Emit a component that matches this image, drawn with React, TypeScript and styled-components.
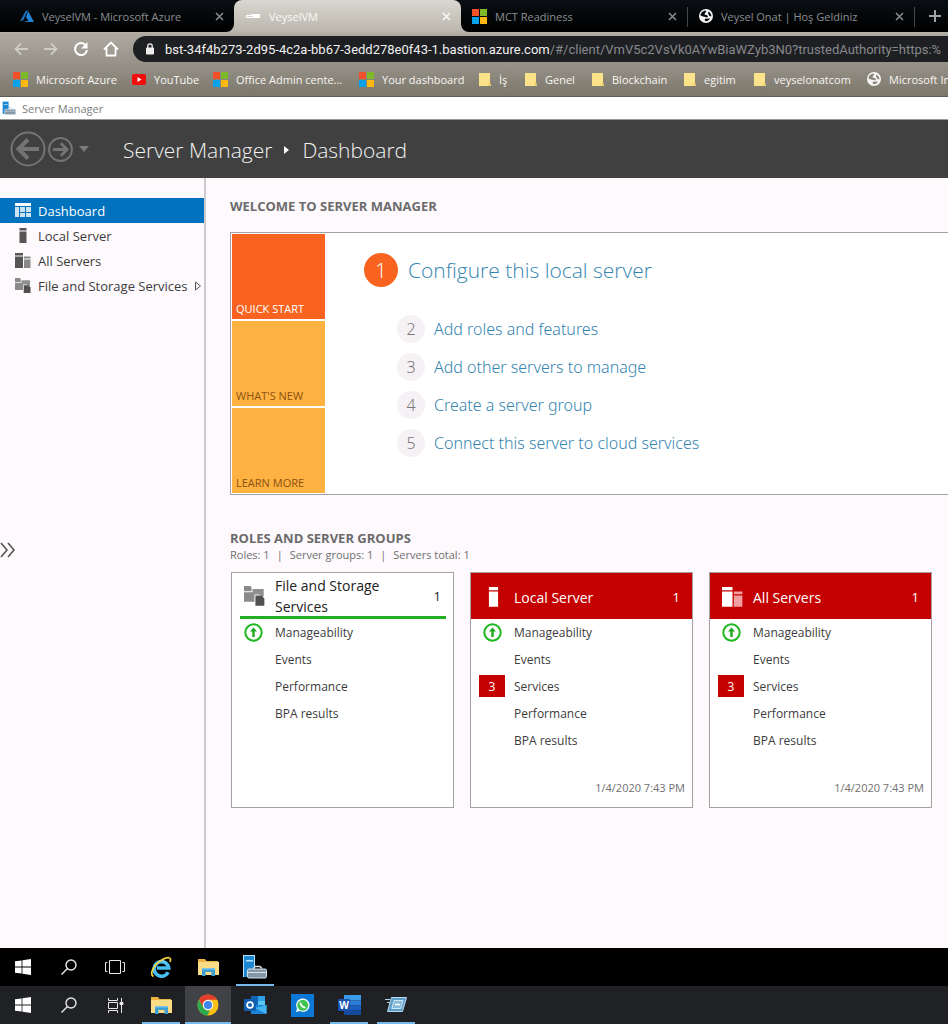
import React from "react";
import styled, { createGlobalStyle, css } from "styled-components";

const GlobalStyle = createGlobalStyle`
  *, *::before, *::after { box-sizing: border-box; }
  body { margin: 0; background: #fdf9fd; font-family: "Open Sans", "Noto Sans", sans-serif; font-size: 13px; color: #444; }
  button, input { font: inherit; color: inherit; background: none; border: 0; padding: 0; margin: 0; }
  a { color: inherit; text-decoration: none; }
  ul, ol { list-style: none; margin: 0; padding: 0; }
  h1, h2, h3, p { margin: 0; font: inherit; }
  svg { display: block; flex: none; }
`;

const Screen = styled.div`
  display: flex;
  flex-direction: column;
  min-height: 100vh;
  overflow: hidden;
`;

/* ---------- Browser ---------- */

const Browser = styled.header`
  color: #fff;
`;

const TabStrip = styled.div`
  display: flex;
  height: 34px;
  background: linear-gradient(#dad7d0, #bbb7ae 31px, #aeaaa1);
`;

const DarkTabs = styled.div<{ $side: "left" | "right" }>`
  display: flex;
  height: 32px;
  background: linear-gradient(#0a0f13, #020405 70%, #000);
  ${(p) =>
    p.$side === "left"
      ? css`padding-left: 9px; border-bottom-right-radius: 8px;`
      : css`flex: 1; border-bottom-left-radius: 8px;`}
`;

const ActiveSlot = styled.div`
  height: 34px;
  background: linear-gradient(#05080a 10px, transparent 10px);
`;

const Tab = styled.div<{ $active?: boolean; $first?: boolean; $line?: boolean }>`
  display: flex;
  align-items: center;
  gap: 7px;
  width: ${(p) => (p.$first ? 225 : 227)}px;
  height: 32px;
  padding: 0 10px 0 11px;
  font-size: 11px;
  color: ${(p) => (p.$active ? "#f8f8f6" : "#8b8e90")};
  ${(p) =>
    p.$active &&
    css`
      height: 34px;
      padding-bottom: 2px;
      border-radius: 8px 8px 0 0;
      background: linear-gradient(#dad7d0, #bbb7ae 31px, #aeaaa1);
    `}
  ${(p) => p.$line && css`border-right: 1px solid transparent; border-image: linear-gradient(transparent 8px, #45484a 8px 26px, transparent 26px) 1;`}
`;

const TabLink = styled.a`
  display: flex;
  align-items: center;
  gap: 8px;
  flex: 1;
  white-space: nowrap;
`;

const IconButton = styled.button`
  display: grid;
  place-items: center;
`;

const NewTab = styled(IconButton)`
  width: 40px;
  height: 32px;
  color: #a0a2a3;
`;

const BrowserBars = styled.div`
  background: linear-gradient(#aeaaa1, #7c776b);
  border-bottom: 1px solid #5f5c53;
`;

const Toolbar = styled.div`
  display: flex;
  align-items: center;
  height: 30px;
  padding-left: 13px;
`;

const NavButtons = styled.nav`
  display: flex;
  gap: 14px;
  width: 120px;
`;

const Address = styled.div`
  display: flex;
  align-items: center;
  flex: 1;
  min-width: 0;
  height: 26px;
  padding-left: 12px;
  background: #1e1f23;
  border-radius: 13px 0 0 13px;
  overflow: hidden;
`;

const UrlPart = styled.input<{ $host?: boolean }>`
  height: 26px;
  outline: 0;
  font-family: Roboto, "Open Sans", sans-serif;
  font-size: 13px;
  ${(p) =>
    p.$host
      ? css`field-sizing: content; flex: none; margin-left: 10px; color: #f1f1f1;`
      : css`flex: 1; min-width: 0; color: #87898c;`}
`;

const Bookmarks = styled.nav`
  display: flex;
  align-items: center;
  gap: 16px;
  height: 32px;
  padding: 0 0 2px 13px;
  overflow: hidden;
  font-size: 11px;
  color: #f7f6f3;
`;

const Bookmark = styled.a<{ $w: number }>`
  display: flex;
  align-items: center;
  gap: 8px;
  flex: none;
  width: ${(p) => p.$w}px;
  white-space: nowrap;
`;

/* ---------- Server Manager window ---------- */

const WindowTitle = styled.div`
  display: flex;
  align-items: center;
  gap: 6px;
  height: 23px;
  padding-left: 2px;
  background: #fff;
  border-bottom: 1px solid #999;
  font-size: 11px;
  color: #7d7d7d;
`;

const Banner = styled.div`
  display: flex;
  align-items: center;
  height: 58px;
  padding-left: 10px;
  background: #404040;
  color: #f2f2f2;
`;

const History = styled.div`
  display: flex;
  align-items: center;
  gap: 2px;
  width: 113px;
`;

const Crumbs = styled.h1`
  display: flex;
  align-items: center;
  gap: 12px;
  padding-top: 2px;
  font-size: 21px;
  font-weight: 300;
  white-space: nowrap;
`;

const Body = styled.div`
  display: flex;
  flex: 1;
`;

const Sidebar = styled.aside`
  display: flex;
  flex-direction: column;
  flex: none;
  width: 206px;
  padding-top: 20px;
  border-right: 2px solid #cdcacd;
`;

const SideLink = styled.a<{ $active?: boolean }>`
  display: flex;
  align-items: center;
  gap: 7px;
  height: 25px;
  padding-left: 15px;
  font-size: 13px;
  white-space: nowrap;
  color: ${(p) => (p.$active ? "#fff" : "#3c3c3c")};
  background: ${(p) => (p.$active ? "#0072be" : "transparent")};
`;

const ExpandButton = styled(IconButton)`
  width: 16px;
  height: 20px;
  margin-top: 242px;
`;

const Main = styled.main`
  flex: 1;
  min-width: 0;
  padding: 18px 0 40px 24px;
`;

const SectionTitle = styled.h2`
  font-size: 13px;
  line-height: 20px;
  font-weight: 700;
  color: #6b6b6b;
`;

const Welcome = styled.section`
  display: flex;
  margin: 16px 0 33px;
  padding: 1px;
  background: #fff;
  border: 1px solid #a3a1a3;
  border-right: 0;
`;

const Tiles = styled.div`
  display: flex;
  flex-direction: column;
  gap: 2px;
  width: 93px;
`;

const Tile = styled.button<{ $active?: boolean }>`
  display: flex;
  align-items: flex-end;
  height: 85px;
  padding: 0 4px 3px;
  font-size: 11px;
  white-space: nowrap;
  color: ${(p) => (p.$active ? "#fff" : "#8a5210")};
  background: ${(p) => (p.$active ? "#f86420" : "#ffb142")};
`;

const Steps = styled.ol`
  padding: 17px 0 0 39px;
  color: #3585b0;
`;

const Step = styled.li<{ $main?: boolean }>`
  display: flex;
  align-items: center;
  gap: ${(p) => (p.$main ? 10 : 9)}px;
  height: 38px;
  padding-left: ${(p) => (p.$main ? 0 : 33)}px;
  margin-bottom: ${(p) => (p.$main ? 21 : 0)}px;
  font-family: ${(p) => (p.$main ? `"Open Sans", sans-serif` : `"Noto Sans", "Open Sans", sans-serif`)};
  font-size: ${(p) => (p.$main ? 21 : 16)}px;
  font-weight: 300;
  white-space: nowrap;
`;

const StepNumber = styled.span<{ $main?: boolean }>`
  display: grid;
  place-items: center;
  width: ${(p) => (p.$main ? 34 : 28)}px;
  height: ${(p) => (p.$main ? 34 : 28)}px;
  border-radius: 50%;
  color: ${(p) => (p.$main ? "#fff" : "#777")};
  background: ${(p) => (p.$main ? "#f86420" : "#f5f1f5")};
`;

const Summary = styled.p`
  display: flex;
  gap: 7px;
  font-size: 11px;
  line-height: 14px;
  color: #707070;
`;

const Cards = styled.div`
  display: flex;
  gap: 16px;
  padding: 10px 0 0 1px;
`;

const Card = styled.article`
  display: flex;
  flex-direction: column;
  flex: none;
  width: 223px;
  min-height: 236px;
  background: #fff;
  border: 1px solid #a3a1a3;
`;

const CardHead = styled.h3<{ $alert?: boolean }>`
  display: flex;
  align-items: center;
  height: 46px;
  font-size: 14px;
  line-height: 21px;
  ${(p) =>
    p.$alert
      ? css`padding: 2px 12px 0 12px; background: #c40000; color: #fff;`
      : css`margin: 0 7px 0 8px; padding: 3px 5px 0 4px; border-bottom: 3px solid #22b022; color: #222;`}
`;

const CardName = styled.a`
  flex: 1;
  margin-left: 10px;
`;

const Count = styled.span`
  font-size: 13px;
`;

const Rows = styled.ul`
  display: flex;
  flex-direction: column;
  gap: 1px;
  flex: 1;
`;

const Row = styled.li`
  display: flex;
  align-items: center;
  gap: 9px;
  height: 26px;
  padding-left: 8px;
  font-size: 12px;
  color: #3c3c3c;
`;

const Slot = styled.span<{ $alert?: boolean }>`
  display: grid;
  place-items: center;
  width: 26px;
  height: 22px;
  color: #fff;
  background: ${(p) => (p.$alert ? "#c40000" : "transparent")};
`;

const Stamp = styled.time`
  padding: 0 7px 10px;
  text-align: right;
  font-size: 11px;
  line-height: 18px;
  color: #707070;
`;

/* ---------- Taskbars ---------- */

const Taskbar = styled.nav<{ $host?: boolean }>`
  display: flex;
  height: 38px;
  background: ${(p) => (p.$host ? "#1f2124" : "#000")};
`;

const Apps = styled.div`
  display: flex;
  gap: 1px;
`;

const TaskButton = styled(IconButton)<{ $open?: boolean; $focus?: boolean }>`
  width: 46px;
  height: 38px;
  color: #fff;
  background:
    ${(p) =>
      p.$focus
        ? "linear-gradient(#76b9ed, #76b9ed) bottom / 46px 2px no-repeat, #404245"
        : p.$open
          ? "linear-gradient(#76b9ed, #76b9ed) bottom / 38px 2px no-repeat"
          : "none"};
`;

/* ---------- Icons ---------- */

const MsLogo = () => (
  <svg width="15" height="15" viewBox="0 0 15 15">
    <path fill="#f0512a" d="M0 0h7v7H0z" />
    <path fill="#7db928" d="M8 0h7v7H8z" />
    <path fill="#08a1ea" d="M0 8h7v7H0z" />
    <path fill="#fdb811" d="M8 8h7v7H8z" />
  </svg>
);

const AzureLogo = () => (
  <svg width="14" height="13" viewBox="0 0 14 13">
    <path fill="#1a6fb8" d="M5.6 1 8 0l-4.500 10L0 11.500z" />
    <path fill="#2387d8" d="M8 1l6 11H3.500l5-1.200L6 7.500z" />
  </svg>
);

const BastionIcon = () => (
  <svg width="16" height="6" viewBox="0 0 16 6">
    <path fill="#fff" d="M1 2h4l1-1h9v4H1z" />
    <path stroke="#d6d2ca" d="M2 3.500h6" />
  </svg>
);

const Globe = ({ hole }: { hole: string }) => (
  <svg width="14" height="14" viewBox="0 0 14 14">
    <circle cx="7" cy="7" r="7" fill="#f5f5f5" />
    <path fill={hole} d="M1.500 6.500C1.600 4 3.500 2 6 1.500l1.500 1L6 4l-.5 1.500 2 .5 1.500 1-.5 1.500-2-.5L4 7.500z" />
    <path fill={hole} d="M9.500 2.500c2 1 3 3 2.800 5L10.500 7 9 4.500zM6.500 9.500l2.500.3L11 9.200c-.8 2-2.200 3-4.300 3L5.500 11z" />
  </svg>
);

const Folder = () => (
  <svg width="12" height="13" viewBox="0 0 12 13">
    <path fill="#fce38a" d="M0 0h11v9l1 4H0z" />
    <path fill="#efcb62" d="M11 8v5H9z" />
  </svg>
);

const YouTube = () => (
  <svg width="14" height="11" viewBox="0 0 14 11">
    <rect width="14" height="11" rx="2" fill="#f20d0d" />
    <path fill="#fff" d="m5.500 3 4 2.500-4 2.500z" />
  </svg>
);

const Cross = () => (
  <svg width="9" height="9" viewBox="0 0 9 9" fill="none" stroke="currentColor" strokeWidth="1.500">
    <path d="m1 1 7 7M8 1 1 8" />
  </svg>
);

const Plus = () => (
  <svg width="12" height="12" viewBox="0 0 12 12" stroke="currentColor" strokeWidth="2">
    <path d="M6 0v12M0 6h12" />
  </svg>
);

const NavArrow = ({ flip }: { flip?: boolean }) => (
  <svg width="16" height="16" viewBox="0 0 16 16" fill="none" stroke="#cfccc5" strokeWidth="1.800">
    <path d={flip ? "M1 8h12M8 2.500 13.500 8 8 13.500" : "M15 8H3M8 2.500 2.500 8 8 13.500"} />
  </svg>
);

const Reload = () => (
  <svg width="16" height="16" viewBox="0 0 16 16">
    <path d="M12.800 4.300A6 6 0 1 0 14 9" fill="none" stroke="#fff" strokeWidth="2" />
    <path fill="#fff" d="M14.500 1v6.500H8z" />
  </svg>
);

const Home = () => (
  <svg width="16" height="16" viewBox="0 0 16 16" fill="none" stroke="#fff" strokeWidth="1.800">
    <path d="M1 8.500 8 1.500l7 7M3.500 7v7.500h9V7" />
  </svg>
);

const Lock = () => (
  <svg width="10" height="12" viewBox="0 0 10 12">
    <rect x="1" y="4.500" width="8" height="7" rx="1" fill="#eee" />
    <path d="M2.800 5V3a2.200 2.200 0 0 1 4.400 0v2" fill="none" stroke="#eee" strokeWidth="1.300" />
  </svg>
);

const ServerManagerIcon = ({ size }: { size: number }) => (
  <svg width={size} height={size} viewBox="0 0 24 24">
    <path fill="#1e87d2" d="M1 1h11v21H1z" />
    <path fill="#b8e0fa" d="M0 0h12v1H1v21H0zM3 5h7v1.500H3zM11 1h1v10h-1z" />
    <path fill="none" stroke="#d5dde3" strokeWidth="1.500" d="M10.500 13.500 12 11.500h5l2 2" />
    <rect x="4.500" y="14" width="19" height="9" rx="1.500" fill="#8497a5" stroke="#d5e2ec" />
    <path stroke="#d5e2ec" d="M5 17.500h18" />
  </svg>
);

const HistoryArrow = ({ size, flip }: { size: number; flip?: boolean }) => (
  <svg width={size} height={size} viewBox="0 0 36 36" fill="none" stroke="#747474">
    <circle cx="18" cy="18" r="16.500" strokeWidth={flip ? 2.800 : 2} />
    <path strokeWidth="4" d={flip ? "M7 18h20M18.500 9l9 9-9 9" : "M29 18H9M18 8.500 8.500 18l9.500 9.500"} />
  </svg>
);

const DashboardIcon = () => (
  <svg width="16" height="15" viewBox="0 0 16 15" fill="#fff">
    <path d="M0 0h16v3H0z" />
    <path opacity=".8" d="M0 4h4v10H0zM5 4h5v5H5zM11 4h5v5h-5zM5 10h5v4H5zM11 10h5v4h-5z" />
  </svg>
);

const ServerIcon = ({ size = 16, color = "#555" }: { size?: number; color?: string }) => (
  <svg width={size} height={size} viewBox="0 0 16 16" fill={color}>
    <path d="M4.500 0h7v2.500h-7zM4.500 3.500h7V15h-7z" />
  </svg>
);

const ServersIcon = ({ size = 16, color = "#555", back = "#888" }: { size?: number; color?: string; back?: string }) => (
  <svg width={size} height={size} viewBox="0 0 16 16">
    <path fill={color} d="M0 0h8v2.500H0zM0 3.500h8V15H0z" />
    <path fill={back} d="M9 3.500h6.500v2H9zM9 6.500h6.500V15H9z" />
  </svg>
);

const StorageIcon = ({ size = 16 }: { size?: number }) => (
  <svg width={size} height={size} viewBox="0 0 16 16">
    <path fill="#8a8a8a" d="M0 0h5l.8 1.500V4H0zM0 4.800h7V12H0z" />
    <path fill="#8f8f8f" d="M6.500 2.200H15V8h-1.500l-2-1.500H8v5.500H6.500z" />
    <path fill="#505050" d="M8.700 7.200h4.600L15.500 9.500V15H8.700z" />
  </svg>
);

const UpIcon = () => (
  <svg width="19" height="19" viewBox="0 0 19 19">
    <circle cx="9.500" cy="9.500" r="8.200" fill="#fff" stroke="#1fb81f" strokeWidth="2" />
    <path fill="#1fa81f" d="M9.500 4.500 13 8.500h-2.300V14H8.300V8.500H6z" />
  </svg>
);

const WindowsLogo = () => (
  <svg width="16" height="16" viewBox="0 0 16 16" fill="#fff">
    <path d="M0 2.300 6.600 1.400v6.200H0zM7.400 1.300 16 0v7.600H7.400zM0 8.400h6.600v6.200L0 13.700zM7.400 8.400H16V16l-8.600-1.300z" />
  </svg>
);

const Magnifier = () => (
  <svg width="16" height="16" viewBox="0 0 16 16" fill="none" stroke="#e8e8e8" strokeWidth="1.400">
    <circle cx="10" cy="6" r="5" />
    <path d="M6.500 9.500.5 15.500" />
  </svg>
);

const TaskView = () => (
  <svg width="20" height="14" viewBox="0 0 20 14" fill="none" stroke="#e8e8e8">
    <path d="M4.500.5h11v13h-11zM2.500 2.500h-2v9h2M17.500 2.500h2v9h-2" />
  </svg>
);

const Timeline = () => (
  <svg width="17" height="15" viewBox="0 0 17 15" fill="none" stroke="#e8e8e8">
    <path d="M1.500 0v2.500h9V0M1.500 15v-2.500h9V15M1.500 4.500h9v6h-9zM14.500 0v15" />
    <path fill="#e8e8e8" d="M13 4.500h3v2h-3z" />
  </svg>
);

const InternetExplorer = () => (
  <svg width="22" height="22" viewBox="0 0 22 22" fill="none">
    <path d="M18 16.200A7.300 7.300 0 1 1 18.700 12H7" stroke="#45bdf0" strokeWidth="3.600" />
    <path d="M16.800 7.200a6.500 6.500 0 0 0-9-1.200" stroke="#a8e3fb" strokeWidth="1" />
    <path d="M3.500 20.500C-1 18 4 8 12.500 3.500 18 .5 22 1 20 6" stroke="#f2d13c" strokeWidth="1.700" />
  </svg>
);

const Explorer = () => (
  <svg width="21" height="18" viewBox="0 0 21 18">
    <path fill="#e9b344" d="M0 1h7l1.500 2H20v4H0z" />
    <path fill="#fbdc86" d="M0 4h21v13H0z" />
    <path fill="#3e9fd0" d="M4 10h13v8h-3.500v-4h-6v4H4z" />
    <path fill="#79c4e6" d="M4 10h13v1.500H4z" />
  </svg>
);

const Chrome = () => (
  <svg width="22" height="22" viewBox="0 0 22 22">
    <circle cx="11" cy="11" r="10.500" fill="#fbc116" />
    <path fill="#e33b2e" d="M1.900 5.750A10.500 10.500 0 0 1 20.100 5.750H11A5.250 5.250 0 0 0 6.450 13.600z" />
    <path fill="#2da94f" d="M1.900 5.750 6.450 13.600A5.250 5.250 0 0 0 13 15.900L10.500 21.500A10.500 10.500 0 0 1 1.900 5.750z" />
    <circle cx="11" cy="11" r="5.200" fill="#f5f5f5" />
    <circle cx="11" cy="11" r="4" fill="#3e83ee" />
  </svg>
);

const Outlook = () => (
  <svg width="23" height="22" viewBox="0 0 23 22">
    <path fill="#1065b5" d="M7 2h14v9H7z" />
    <path fill="#2f9fe5" d="M14 2h7v5h-7z" />
    <path fill="#5cc6f5" d="M14 7h7v5h-7z" />
    <path fill="#1a85d6" d="M7 11l15.500 0V20H7z" />
    <path fill="#43b4ef" d="M22.500 11v9L11 14z" />
    <rect x="0" y="5" width="12" height="12" rx="1" fill="#0f5fb0" />
    <circle cx="6" cy="11" r="2.900" fill="none" stroke="#fff" strokeWidth="1.800" />
  </svg>
);

const WhatsApp = () => (
  <svg width="23" height="23" viewBox="0 0 23 23">
    <path fill="#0a78d4" d="M0 0h23v23H0z" />
    <path fill="#fff" d="m5 18 1-3.600A6.700 6.700 0 1 1 8.600 17z" />
    <circle cx="11.800" cy="11.300" r="5.500" fill="#3fc351" />
    <path fill="none" stroke="#fff" strokeWidth="1.700" d="M9.500 8.500c-.3 2.500 2.200 5 5 5.200" />
  </svg>
);

const Word = () => (
  <svg width="23" height="21" viewBox="0 0 23 21">
    <path fill="#3a9bea" d="M6 0h17v5.500H6z" />
    <path fill="#2a7cd8" d="M6 5.500h17v5H6z" />
    <path fill="#1d5fc0" d="M6 10.500h17v5H6z" />
    <path fill="#134a9c" d="M6 15.500h17V20H6z" />
    <rect y="4" width="12" height="12" rx="1" fill="#1852ae" />
    <text x="6" y="14" fontSize="10" fontFamily="Open Sans, sans-serif" fontWeight="700" fill="#fff" textAnchor="middle">W</text>
  </svg>
);

const RunApp = () => (
  <svg width="23" height="18" viewBox="0 0 23 18">
    <path fill="#5e9cc8" stroke="#b5d8ee" d="M6.500 1.500h15l-4 14h-15z" />
    <path fill="#86b9da" stroke="#cfe6f4" d="M9 4.500h9l-2.200 8H6.800z" />
    <path stroke="#fff" strokeWidth="1.500" d="M10 8.500h5" />
    <path stroke="#b5d8ee" d="M0 3.500h5M2 6.500h3" />
  </svg>
);

/* ---------- Data ---------- */

const bookmarks = [
  { label: "Microsoft Azure", icon: <MsLogo />, w: 103 },
  { label: "YouTube", icon: <YouTube />, w: 65 },
  { label: "Office Admin cente...", icon: <MsLogo />, w: 130 },
  { label: "Your dashboard", icon: <MsLogo />, w: 104 },
  { label: "İş", icon: <Folder />, w: 30 },
  { label: "Genel", icon: <Folder />, w: 51 },
  { label: "Blockchain", icon: <Folder />, w: 76 },
  { label: "egitim", icon: <Folder />, w: 54 },
  { label: "veyselonatcom", icon: <Folder />, w: 97 },
  { label: "Microsoft In", icon: <Globe hole="#8b867b" />, w: 82 },
];

const steps = [
  "Configure this local server",
  "Add roles and features",
  "Add other servers to manage",
  "Create a server group",
  "Connect this server to cloud services",
];

const cards = [
  { name: "File and Storage Services", icon: <StorageIcon size={21} />, alert: false, rows: ["Manageability", "Events", "Performance", "BPA results"] },
  { name: "Local Server", icon: <ServerIcon size={21} color="#fff" />, alert: true, rows: ["Manageability", "Events", "Services", "Performance", "BPA results"] },
  { name: "All Servers", icon: <ServersIcon size={21} color="#fff" back="#f0a0a0" />, alert: true, rows: ["Manageability", "Events", "Services", "Performance", "BPA results"] },
];

export default function App() {
  return (
    <Screen>
      <GlobalStyle />
      <Browser>
        <TabStrip>
          <DarkTabs $side="left">
            <Tab $first>
              <TabLink href="#azure"><AzureLogo />VeyselVM - Microsoft Azure</TabLink>
              <IconButton aria-label="Close tab"><Cross /></IconButton>
            </Tab>
          </DarkTabs>
          <ActiveSlot>
            <Tab $active>
              <TabLink href="#vm"><BastionIcon />VeyselVM</TabLink>
              <IconButton aria-label="Close tab"><Cross /></IconButton>
            </Tab>
          </ActiveSlot>
          <DarkTabs $side="right">
            <Tab $line>
              <TabLink href="#mct"><MsLogo />MCT Readiness</TabLink>
              <IconButton aria-label="Close tab"><Cross /></IconButton>
            </Tab>
            <Tab $line>
              <TabLink href="#onat"><Globe hole="#05080a" />Veysel Onat | Hoş Geldiniz</TabLink>
              <IconButton aria-label="Close tab"><Cross /></IconButton>
            </Tab>
            <NewTab aria-label="New tab"><Plus /></NewTab>
          </DarkTabs>
        </TabStrip>
        <BrowserBars>
          <Toolbar>
            <NavButtons>
              <IconButton aria-label="Back"><NavArrow /></IconButton>
              <IconButton aria-label="Forward"><NavArrow flip /></IconButton>
              <IconButton aria-label="Reload"><Reload /></IconButton>
              <IconButton aria-label="Home"><Home /></IconButton>
            </NavButtons>
            <Address>
              <Lock />
              <UrlPart $host aria-label="Site" defaultValue="bst-34f4b273-2d95-4c2a-bb67-3edd278e0f43-1.bastion.azure.com" />
              <UrlPart aria-label="Path" defaultValue="/#/client/VmV5c2VsVk0AYwBiaWZyb3N0?trustedAuthority=https:%" />
            </Address>
          </Toolbar>
          <Bookmarks>
            {bookmarks.map((b) => (
              <Bookmark key={b.label} href="#bookmark" $w={b.w}>{b.icon}{b.label}</Bookmark>
            ))}
          </Bookmarks>
        </BrowserBars>
      </Browser>

      <WindowTitle><ServerManagerIcon size={14} />Server Manager</WindowTitle>
      <Banner>
        <History>
          <IconButton aria-label="Back"><HistoryArrow size={36} /></IconButton>
          <IconButton aria-label="Forward"><HistoryArrow size={25} flip /></IconButton>
          <IconButton aria-label="History">
            <svg width="18" height="6" viewBox="0 0 18 6"><path fill="#7b7b7b" d="M4 0h10L9 6z" /></svg>
          </IconButton>
        </History>
        <Crumbs>
          <span>Server Manager</span>
          <svg width="6" height="8" viewBox="0 0 6 8"><path fill="#fff" d="M0 0l5 4-5 4z" /></svg>
          <span>Dashboard</span>
        </Crumbs>
      </Banner>

      <Body>
        <Sidebar>
          <SideLink href="#dashboard" $active><DashboardIcon />Dashboard</SideLink>
          <SideLink href="#local"><ServerIcon />Local Server</SideLink>
          <SideLink href="#all"><ServersIcon />All Servers</SideLink>
          <SideLink href="#storage">
            <StorageIcon />File and Storage Services
            <svg width="8" height="10" viewBox="0 0 8 10"><path fill="none" stroke="#555" d="M.5 1l5 4-5 4z" /></svg>
          </SideLink>
          <ExpandButton aria-label="Expand">
            <svg width="16" height="16" viewBox="0 0 16 16" fill="none" stroke="#555" strokeWidth="1.600"><path d="m1 1 6 7-6 7M8 1l6 7-6 7" /></svg>
          </ExpandButton>
        </Sidebar>
        <Main>
          <SectionTitle>WELCOME TO SERVER MANAGER</SectionTitle>
          <Welcome>
            <Tiles>
              <Tile $active>QUICK START</Tile>
              <Tile>WHAT'S NEW</Tile>
              <Tile>LEARN MORE</Tile>
            </Tiles>
            <Steps>
              {steps.map((s, i) => (
                <Step key={s} $main={i === 0}>
                  <StepNumber $main={i === 0}>{i + 1}</StepNumber>
                  <a href="#step">{s}</a>
                </Step>
              ))}
            </Steps>
          </Welcome>
          <SectionTitle>ROLES AND SERVER GROUPS</SectionTitle>
          <Summary>
            <span>Roles: 1</span><span>|</span><span>Server groups: 1</span><span>|</span><span>Servers total: 1</span>
          </Summary>
          <Cards>
            {cards.map((c) => (
              <Card key={c.name}>
                <CardHead $alert={c.alert}>
                  {c.icon}
                  <CardName href="#card">{c.name}</CardName>
                  <Count>1</Count>
                </CardHead>
                <Rows>
                  {c.rows.map((r) => (
                    <Row key={r}>
                      <Slot $alert={r === "Services"}>{r === "Manageability" ? <UpIcon /> : r === "Services" ? "3" : null}</Slot>
                      <a href="#row">{r}</a>
                    </Row>
                  ))}
                </Rows>
                {c.alert && <Stamp>1/4/2020 7:43 PM</Stamp>}
              </Card>
            ))}
          </Cards>
        </Main>
      </Body>

      <Taskbar aria-label="Remote taskbar">
        <TaskButton aria-label="Start"><WindowsLogo /></TaskButton>
        <TaskButton aria-label="Search"><Magnifier /></TaskButton>
        <TaskButton aria-label="Task view"><TaskView /></TaskButton>
        <Apps>
          <TaskButton aria-label="Internet Explorer"><InternetExplorer /></TaskButton>
          <TaskButton aria-label="File Explorer"><Explorer /></TaskButton>
          <TaskButton aria-label="Server Manager" $open><ServerManagerIcon size={24} /></TaskButton>
        </Apps>
      </Taskbar>
      <Taskbar $host aria-label="Taskbar">
        <TaskButton aria-label="Start"><WindowsLogo /></TaskButton>
        <TaskButton aria-label="Search"><Magnifier /></TaskButton>
        <TaskButton aria-label="Task view"><Timeline /></TaskButton>
        <Apps>
          <TaskButton aria-label="File Explorer" $open><Explorer /></TaskButton>
          <TaskButton aria-label="Chrome" $focus><Chrome /></TaskButton>
          <TaskButton aria-label="Outlook"><Outlook /></TaskButton>
          <TaskButton aria-label="WhatsApp"><WhatsApp /></TaskButton>
          <TaskButton aria-label="Word" $open><Word /></TaskButton>
          <TaskButton aria-label="Remote app" $open><RunApp /></TaskButton>
        </Apps>
      </Taskbar>
    </Screen>
  );
}
